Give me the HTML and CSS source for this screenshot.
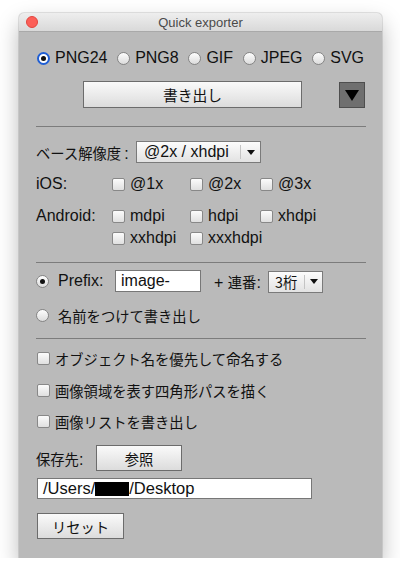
FILE: index.html
```html
<!DOCTYPE html>
<html lang="ja">
<head>
<meta charset="utf-8">
<title>Quick exporter</title>
<link rel="stylesheet" href="styles.css">
</head>
<body>
<div class="window">
  <div class="titlebar">
    <span class="close"></span>
    <span class="title">Quick exporter</span>
    <span></span>
  </div>
  <div class="content">
    <div class="row formats">
      <span class="opt"><span class="radio on focus"></span>PNG24</span>
      <span class="opt"><span class="radio"></span>PNG8</span>
      <span class="opt"><span class="radio"></span>GIF</span>
      <span class="opt"><span class="radio"></span>JPEG</span>
      <span class="opt"><span class="radio"></span>SVG</span>
    </div>
    <div class="row exportrow">
      <div class="btn export jp">書き出し</div>
      <div class="menubtn">
        <svg width="14" height="11" viewBox="0 0 14 11"><polygon points="0,0 14,0 7,11" fill="#000"/></svg>
      </div>
    </div>
    <div class="sep sep1"></div>
    <div class="row baserow">
      <span class="jp baselbl">ベース解像度 <span class="lat">:</span></span>
      <div class="select base"><span class="val">@2x / xhdpi</span><span class="arrow"><span class="tri"></span></span></div>
    </div>
    <div class="row dens ios">
      <span class="lbl">iOS:</span>
      <span class="cell c1"><span class="cb"></span>@1x</span>
      <span class="cell c2"><span class="cb"></span>@2x</span>
      <span class="cell"><span class="cb"></span>@3x</span>
    </div>
    <div class="row dens android">
      <span class="lbl">Android:</span>
      <span class="cell c1"><span class="cb"></span>mdpi</span>
      <span class="cell c2"><span class="cb"></span>hdpi</span>
      <span class="cell"><span class="cb"></span>xhdpi</span>
    </div>
    <div class="row dens android2">
      <span class="lbl"></span>
      <span class="cell c1"><span class="cb"></span>xxhdpi</span>
      <span class="cell c2"><span class="cb"></span>xxxhdpi</span>
    </div>
    <div class="sep sep2"></div>
    <div class="row prefixrow">
      <span class="radio on"></span>
      <span class="prefixlbl">Prefix:</span>
      <span class="input prefix">image-</span>
      <span class="renban">+ <span class="jp">連番</span>:</span>
      <div class="select digits"><span class="val jp">3桁</span><span class="arrow"><span class="tri"></span></span></div>
    </div>
    <div class="row namerow">
      <span class="radio"></span>
      <span class="jp namelbl">名前をつけて書き出し</span>
    </div>
    <div class="sep sep3"></div>
    <div class="row opt1"><span class="cb"></span><span class="jp">オブジェクト名を優先して命名する</span></div>
    <div class="row opt2"><span class="cb"></span><span class="jp">画像領域を表す四角形パスを描く</span></div>
    <div class="row opt3"><span class="cb"></span><span class="jp">画像リストを書き出し</span></div>
    <div class="row saverow">
      <span class="jp savelbl">保存先<span class="lat">:</span></span>
      <div class="btn browse jp">参照</div>
    </div>
    <div class="row pathrow">
      <span class="input path">/Users/<span class="redact"></span>/Desktop</span>
    </div>
    <div class="row resetrow">
      <div class="btn reset jp">リセット</div>
    </div>
  </div>
</div>
</body>
</html>
```
FILE: styles.css
```css
* { box-sizing: border-box; }

body {
  margin: 0;
  background: #ffffff;
  font-family: "Liberation Sans", "Noto Sans CJK JP", sans-serif;
  color: #111111;
}

.window {
  margin: 13px 0 0 19px;
  width: 363px;
  height: 545px;
  background: #bababa;
  border-radius: 5px 5px 0 0;
  box-shadow: 0 0 0 1px rgba(0, 0, 0, 0.10), 0 10px 22px rgba(0, 0, 0, 0.28);
  display: flex;
  flex-direction: column;
}

.titlebar {
  height: 19px;
  flex: none;
  display: grid;
  grid-template-columns: 1fr auto 1fr;
  align-items: center;
  background: linear-gradient(#eeeeee, #d9d9d9);
  border-bottom: 1px solid #a9a9a9;
  border-radius: 5px 5px 0 0;
}

.close {
  width: 12px;
  height: 12px;
  margin-left: 7px;
  border-radius: 50%;
  background: #fc5f58;
  border: 1px solid #e2463f;
}

.title {
  font-size: 13px;
  color: #4a4a4a;
}

.content {
  flex: 1;
  padding: 0 16px 0 17px;
  display: flex;
  flex-direction: column;
  font-size: 16px;
}

.jp {
  font-family: "Noto Sans CJK JP", "Liberation Sans", sans-serif;
  font-size: 14.3px;
}

.lat {
  font-family: "Liberation Sans", sans-serif;
  font-size: 16px;
}

.row {
  display: flex;
  align-items: center;
  flex: none;
}

/* radio buttons */
.radio {
  width: 13px;
  height: 13px;
  flex: none;
  border-radius: 50%;
  border: 1px solid #858585;
  background: linear-gradient(#fdfdfd, #dcdcdc);
  display: flex;
  align-items: center;
  justify-content: center;
}

.radio.on::after {
  content: "";
  width: 5px;
  height: 5px;
  border-radius: 50%;
  background: #111;
}

.radio.focus {
  border: 2px solid #1f5ed4;
  background: #ffffff;
}

/* checkboxes */
.cb {
  width: 13px;
  height: 13px;
  flex: none;
  border: 1px solid #888888;
  border-radius: 2px;
  background: linear-gradient(#fbfbfb, #e0e0e0);
  margin-right: 5px;
}

/* format row */
.formats {
  margin-top: 16px;
  height: 20px;
  justify-content: space-between;
  padding: 0 2px 0 1px;
}

.opt {
  display: flex;
  align-items: center;
  gap: 5px;
}

/* export row */
.exportrow {
  margin-top: 13px;
  height: 27px;
}

.btn {
  height: 27px;
  display: flex;
  align-items: center;
  justify-content: center;
  border: 1px solid #6c6c6c;
  background: linear-gradient(#fafafa, #dcdcdc);
  color: #111;
}

.export {
  margin-left: 47px;
  width: 219px;
  font-size: 14.8px;
}

.menubtn {
  margin-left: auto;
  margin-right: 1px;
  margin-top: 1px;
  width: 26px;
  height: 26px;
  background: #6f6f6f;
  border: 1px solid #4e4e4e;
  display: flex;
  align-items: center;
  justify-content: center;
}

.menubtn svg { display: block; margin-top: 1px; }

/* separators */
.sep {
  height: 1px;
  flex: none;
  background: #7c7c7c;
}
.sep1 { margin-top: 18px; }
.sep2 { margin-top: 14px; }
.sep3 { margin-top: 13px; }

/* selects */
.select {
  display: flex;
  align-items: stretch;
  height: 22px;
  border: 1px solid #7a7a7a;
  background: linear-gradient(#fcfcfc, #e2e2e2);
}

.select .val {
  flex: 1;
  display: flex;
  align-items: center;
}

.select .arrow {
  width: 20px;
  flex: none;
  display: flex;
  align-items: center;
  justify-content: center;
  border-left: 1px solid #c4c4c4;
  margin: 3px 0;
}

.tri {
  width: 0;
  height: 0;
  border-left: 4px solid transparent;
  border-right: 4px solid transparent;
  border-top: 5px solid #111;
}

.baserow {
  margin-top: 14px;
  height: 22px;
}

.baselbl { width: 100px; flex: none; }

.base { width: 125px; }
.base .val { padding-left: 7px; }

/* density grid */
.dens { height: 20px; }
.ios { margin-top: 11px; }
.android { margin-top: 12px; }
.android2 { margin-top: 2px; }

.lbl { width: 76px; flex: none; }

.cell {
  display: flex;
  align-items: center;
}
.c1 { width: 78px; }
.c2 { width: 70px; }

/* prefix */
.prefixrow {
  margin-top: 7px;
  height: 22px;
}

.prefixlbl {
  width: 57px;
  margin-left: 9px;
  flex: none;
}

.input {
  display: flex;
  align-items: center;
  background: #ffffff;
  border: 1px solid #777777;
  padding-left: 5px;
  white-space: nowrap;
}

.prefix {
  width: 86px;
  height: 22px;
}

.renban {
  margin-left: 13px;
  width: 54px;
  flex: none;
}

.digits {
  width: 55px;
  margin-top: 1px;
}
.digits .val { padding-left: 6px; }
.digits .arrow { width: 18px; }

.namerow {
  margin-top: 13px;
  height: 20px;
}

.namelbl { margin-left: 9px; }

/* option checkboxes */
.opt1, .opt2, .opt3 {
  height: 20px;
  padding-left: 1px;
}
.opt1 { margin-top: 9px; }
.opt2 { margin-top: 12px; }
.opt3 { margin-top: 11px; }

/* save */
.saverow {
  margin-top: 14px;
  height: 26px;
}

.savelbl { width: 60px; flex: none; }

.browse {
  width: 86px;
  height: 26px;
}

.pathrow {
  margin-top: 7px;
  height: 21px;
}

.path {
  margin-left: 1px;
  width: 275px;
  height: 21px;
  font-size: 16.5px;
}

.redact {
  display: inline-block;
  width: 34px;
  height: 14px;
  background: #000;
}

.resetrow {
  margin-top: 14px;
  height: 26px;
}

.reset {
  margin-left: 1px;
  width: 87px;
  height: 26px;
}
```
